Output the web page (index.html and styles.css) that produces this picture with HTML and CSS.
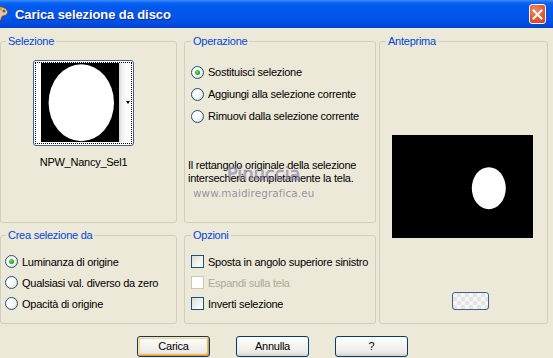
FILE: index.html
```html
<!DOCTYPE html>
<html lang="it">
<head>
<meta charset="utf-8">
<title>Carica selezione da disco</title>
<link rel="stylesheet" href="styles.css">
</head>
<body>
<div class="window">
  <div class="titlebar">
    <svg class="app-icon" width="16" height="18" viewBox="0 0 16 18">
      <path d="M2 4 C5 1 12 1 15 5 C17 9 13 11 11 11 C9 11 10 14 8 16 C4 18 0 14 0 10 C0 7 1 5 2 4 Z" fill="#e8c89a" stroke="#7a4a20" stroke-width="1"/>
      <circle cx="5" cy="5" r="1.8" fill="#d8261c"/>
      <circle cx="9" cy="4" r="1.6" fill="#f0a020"/>
      <circle cx="12" cy="6" r="1.5" fill="#2a6ad8"/>
      <circle cx="4" cy="10" r="1.6" fill="#e04a20"/>
      <circle cx="6" cy="13.5" r="1.4" fill="#3a8a3a"/>
    </svg>
    <span class="title">Carica selezione da disco</span>
    <span class="close">
      <svg width="11" height="11" viewBox="0 0 11 11"><path d="M1.5 1.5 L9.5 9.5 M9.5 1.5 L1.5 9.5" stroke="#fff" stroke-width="2" stroke-linecap="square"/></svg>
    </span>
  </div>
  <div class="body">
    <div class="groups">
      <fieldset class="group g-sel">
        <legend>Selezione</legend>
        <div class="thumb-wrap">
          <div class="thumb">
            <div class="thumb-focus">
              <svg class="thumb-img" width="78" height="79" viewBox="0 0 78 79">
                <rect width="78" height="79" fill="#000"/>
                <ellipse cx="40.3" cy="39.7" rx="32.7" ry="38.5" fill="#fff"/>
              </svg>
              <div class="thumb-strip"><span class="arrow"></span></div>
            </div>
          </div>
          <div class="thumb-label">NPW_Nancy_Sel1</div>
        </div>
      </fieldset>

      <fieldset class="group g-op">
        <legend>Operazione</legend>
        <div class="opt-list op-list">
          <label class="opt"><span class="radio checked"></span><span>Sostituisci selezione</span></label>
          <label class="opt"><span class="radio"></span><span>Aggiungi alla selezione corrente</span></label>
          <label class="opt"><span class="radio"></span><span>Rimuovi dalla selezione corrente</span></label>
        </div>
        <p class="info">Il rettangolo originale della selezione<br>intersecherà completamente la tela.</p>
        <span class="wm-name">Pinuccia</span>
        <span class="wm-url">www.maidiregrafica.eu</span>
      </fieldset>

      <fieldset class="group g-prev">
        <legend>Anteprima</legend>
        <svg class="preview" width="141" height="103" viewBox="0 0 141 103">
          <rect width="141" height="103" fill="#000"/>
          <ellipse cx="96.8" cy="53.2" rx="17" ry="21" fill="#fff"/>
        </svg>
        <span class="mini-btn"></span>
      </fieldset>

      <fieldset class="group g-crea">
        <legend>Crea selezione da</legend>
        <div class="opt-list crea-list">
          <label class="opt"><span class="radio checked"></span><span>Luminanza di origine</span></label>
          <label class="opt"><span class="radio"></span><span>Qualsiasi val. diverso da zero</span></label>
          <label class="opt"><span class="radio"></span><span>Opacità di origine</span></label>
        </div>
      </fieldset>

      <fieldset class="group g-opz">
        <legend>Opzioni</legend>
        <div class="opt-list opz-list">
          <label class="opt"><span class="check"></span><span>Sposta in angolo superiore sinistro</span></label>
          <label class="opt disabled"><span class="check"></span><span>Espandi sulla tela</span></label>
          <label class="opt"><span class="check"></span><span>Inverti selezione</span></label>
        </div>
      </fieldset>
    </div>

    <div class="buttons">
      <span class="btn default">Carica</span>
      <span class="btn">Annulla</span>
      <span class="btn">?</span>
    </div>
  </div>
</div>
</body>
</html>
```

FILE: styles.css
```css
* { box-sizing: border-box; }

html, body {
  margin: 0;
  padding: 0;
}

body {
  width: 553px;
  height: 358px;
  overflow: hidden;
  font-family: "Liberation Sans", Arial, sans-serif;
  font-size: 11px;
  letter-spacing: -0.25px;
  color: #000;
  background: #ece9d8;
}

.window {
  width: 553px;
  height: 358px;
  display: flex;
  flex-direction: column;
}

/* ---------- title bar ---------- */
.titlebar {
  height: 28px;
  flex: none;
  display: flex;
  align-items: center;
  background: linear-gradient(#3d8bff 0, #0a62f2 3px, #0058ee 7px, #0055ea 18px, #0049dc 25px, #0043cf 28px);
  overflow: hidden;
}

.app-icon {
  flex: none;
  margin-left: -8px;
  margin-top: -1px;
}

.title {
  margin-left: 7px;
  color: #fff;
  font-size: 13px;
  font-weight: bold;
  letter-spacing: -0.1px;
  text-shadow: 1px 1px 0 #0b2a86;
}

.close {
  margin-left: auto;
  margin-right: 7px;
  width: 17px;
  height: 20px;
  border: 1px solid #fff;
  border-radius: 3px;
  background: radial-gradient(circle at 35% 30%, #f08a68 0, #e35a35 55%, #c93c1c 100%);
  display: flex;
  align-items: center;
  justify-content: center;
}

/* ---------- body ---------- */
.body {
  flex: 1;
  padding-top: 7px;
}

.groups {
  display: grid;
  grid-template-columns: 177px 7px 192px 3px 169px;
  grid-template-rows: 188px 95px;
  row-gap: 6px;
}

.group {
  margin: 0;
  padding: 0;
  min-width: 0;
  border: 1px solid #d0d0bf;
  border-radius: 3px;
  position: relative;
}

.group legend {
  padding: 0 2px;
  margin-left: 6px;
  color: #0046d5;
  line-height: 13px;
}

.g-sel { grid-column: 1; grid-row: 1; }
.g-op { grid-column: 3; grid-row: 1; }
.g-prev { grid-column: 5; grid-row: 1 / span 2; }
.g-crea { grid-column: 1; grid-row: 2; }
.g-opz { grid-column: 3; grid-row: 2; }

.g-sel legend, .g-crea legend { margin-left: 5px; }

/* ---------- selezione ---------- */
.thumb-wrap {
  width: 101px;
  margin: 12px 0 0 32px;
  display: flex;
  flex-direction: column;
  align-items: center;
}

.thumb {
  width: 101px;
  height: 86px;
  border: 1px solid #3f5f8c;
  border-radius: 3px;
  background: #fff;
  padding: 1px;
}

.thumb-focus {
  height: 100%;
  border: 1px dotted #000;
  padding-left: 5px;
  display: flex;
}

.thumb-img { display: block; flex: none; }

.thumb-strip {
  flex: 1;
  height: 79px;
  background: linear-gradient(to right, #d6d6d6 0, #efefef 3px, #fafafa 6px, #fff 100%);
  position: relative;
}

.arrow {
  position: absolute;
  left: 7px;
  top: 38px;
  width: 0;
  height: 0;
  border-left: 2.5px solid transparent;
  border-right: 2.5px solid transparent;
  border-top: 3px solid #000;
}

.thumb-label {
  margin-top: 10px;
  line-height: 13px;
  white-space: nowrap;
}

/* ---------- option lists ---------- */
.opt-list {
  display: flex;
  flex-direction: column;
}

.opt {
  display: flex;
  align-items: center;
  gap: 4px;
  white-space: nowrap;
}

.op-list { padding: 13px 0 0 6px; }
.op-list .opt { height: 22px; }

.crea-list { padding: 9px 0 0 4px; }
.crea-list .opt { height: 21px; }

.opz-list { padding: 9px 0 0 6px; }
.opz-list .opt { height: 21px; }

.radio {
  flex: none;
  width: 13px;
  height: 13px;
  border-radius: 50%;
  border: 1px solid #1c5180;
  background: radial-gradient(circle at 35% 35%, #fff 0, #fff 35%, #e6e3d6 75%, #d2cfc0 100%);
  position: relative;
}

.radio.checked::after {
  content: "";
  position: absolute;
  left: 3px;
  top: 3px;
  width: 5px;
  height: 5px;
  border-radius: 50%;
  background: radial-gradient(circle at 40% 40%, #7be07b 0, #2bb02b 50%, #178b17 100%);
}

.check {
  flex: none;
  width: 13px;
  height: 13px;
  border: 1px solid #1c5180;
  background: linear-gradient(135deg, #dcdcd7 0, #f4f4f0 60%, #fff 100%);
}

.opt.disabled { color: #aca899; }
.opt.disabled .check {
  border-color: #cac8bb;
  background: #fff;
}

.info {
  margin: 32px 0 0 3px;
  line-height: 13px;
  white-space: nowrap;
}

/* watermark lying over the dialog text */
.wm-name {
  position: absolute;
  left: 42px;
  top: 116px;
  font-family: "DejaVu Sans", sans-serif;
  font-size: 17.5px;
  letter-spacing: 0.2px;
  line-height: 20px;
  color: rgba(165, 155, 200, 0.7);
  -webkit-text-stroke: 0.6px rgba(105, 98, 145, 0.6);
  pointer-events: none;
}

.wm-url {
  position: absolute;
  left: 8px;
  top: 139px;
  font-family: "DejaVu Sans", sans-serif;
  font-size: 10.4px;
  letter-spacing: 0.1px;
  line-height: 12px;
  color: rgba(110, 105, 140, 0.7);
  pointer-events: none;
}

/* ---------- anteprima ---------- */
.preview {
  display: block;
  margin: 87px 0 0 12px;
}

.mini-btn {
  display: block;
  width: 37px;
  height: 18px;
  margin: 54px 0 0 72px;
  border: 1px solid #3f5f8c;
  border-radius: 3px;
  background-color: #f6f6f6;
  background-image:
    linear-gradient(45deg, #e4e4e4 25%, transparent 25%, transparent 75%, #e4e4e4 75%),
    linear-gradient(45deg, #e4e4e4 25%, transparent 25%, transparent 75%, #e4e4e4 75%);
  background-size: 8px 8px;
  background-position: 0 0, 4px 4px;
}

/* ---------- buttons ---------- */
.buttons {
  display: flex;
  gap: 26px;
  margin: 12px 0 0 137px;
}

.btn {
  width: 73px;
  height: 21px;
  border: 1px solid #003c74;
  border-radius: 3px;
  background: linear-gradient(#ffffff 0, #f6f5f1 40%, #ecebe6 80%, #d6d0c5 100%);
  display: flex;
  align-items: center;
  justify-content: center;
  line-height: 13px;
}

.btn.default {
  box-shadow:
    inset 1px 1px 0 #ffe6a8,
    inset -1px -1px 0 #e59a3a,
    inset 2px 2px 0 #fdd38a,
    inset -2px -2px 0 #f6b94e;
}
```
